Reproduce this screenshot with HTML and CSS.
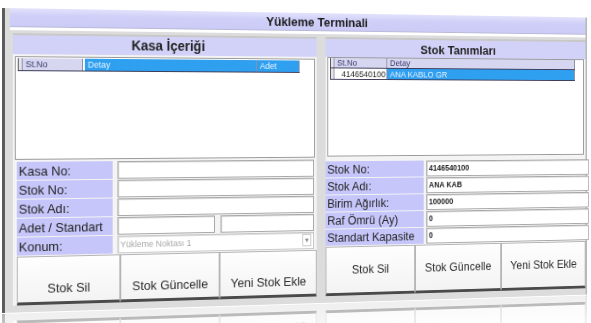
FILE: index.html
```html
<!DOCTYPE html>
<html lang="tr">
<head>
    <meta charset="UTF-8">
    <title>Yükleme Terminali</title>
    <link rel="stylesheet" href="styles.css">
</head>
<body>

<div class="stage">
    <div class="window">
        <div class="titlebar">Yükleme Terminali</div>

        <div class="panels">
            <!-- Kasa İçeriği -->
            <section class="panel panel-left">
                <div class="panel-head">Kasa İçeriği</div>
                <div class="grid">
                    <div class="grid-row grid-head">
                        <span class="cell mark"></span>
                        <span class="cell c-no">St.No</span>
                        <span class="cell c-detay sel">Detay</span>
                        <span class="cell c-adet sel">Adet</span>
                    </div>
                </div>
                <div class="form">
                    <div class="row"><label>Kasa No:</label><div class="field"></div></div>
                    <div class="row"><label>Stok No:</label><div class="field"></div></div>
                    <div class="row"><label>Stok Adı:</label><div class="field"></div></div>
                    <div class="row"><label>Adet / Standart</label><div class="field"></div><div class="field"></div></div>
                    <div class="row"><label>Konum:</label><div class="field combo">Yükleme Noktası 1<span class="arrow">&#9662;</span></div></div>
                </div>
                <div class="buttons">
                    <button>Stok Sil</button>
                    <button>Stok Güncelle</button>
                    <button>Yeni Stok Ekle</button>
                </div>
            </section>

            <!-- Stok Tanımları -->
            <section class="panel panel-right">
                <div class="panel-head">Stok Tanımları</div>
                <div class="grid">
                    <div class="grid-row grid-head">
                        <span class="cell mark"></span>
                        <span class="cell c-no">St.No</span>
                        <span class="cell c-detay">Detay</span>
                    </div>
                    <div class="grid-row grid-data">
                        <span class="cell mark"></span>
                        <span class="cell c-no num">4146540100</span>
                        <span class="cell c-detay sel">ANA KABLO GR</span>
                    </div>
                </div>
                <div class="form">
                    <div class="row"><label>Stok No:</label><div class="field">4146540100</div></div>
                    <div class="row"><label>Stok Adı:</label><div class="field">ANA KAB</div></div>
                    <div class="row"><label>Birim Ağırlık:</label><div class="field">100000</div></div>
                    <div class="row"><label>Raf Ömrü (Ay)</label><div class="field">0</div></div>
                    <div class="row"><label>Standart Kapasite</label><div class="field">0</div></div>
                </div>
                <div class="buttons">
                    <button>Stok Sil</button>
                    <button>Stok Güncelle</button>
                    <button>Yeni Stok Ekle</button>
                </div>
            </section>
        </div>
    </div>
</div>

</body>
</html>
```

FILE: styles.css
```css
* {
    margin: 0;
    padding: 0;
    box-sizing: border-box;
}

body {
    font-family: 'Liberation Sans', Arial, sans-serif;
    background: #fff;
    color: #222;
    overflow: hidden;
}

/* Stage clips the flat (wider) window */
.stage {
    width: 100%;
    height: 323px;
    overflow: hidden;
    padding: 8px 0 0 2px;
}

/* Window, tilted away to the right */
.window {
    width: 652px;
    height: 305px;
    background: #dcdcdc;
    border-left: 3px solid #5b5b5b;
    border-right: 2px solid #b8b8b8;
    padding: 0 0 7px 5px;
    display: flex;
    flex-direction: column;
    transform-origin: 0 104px;
    transform: perspective(1000px) rotateY(8.9deg);
    -webkit-box-reflect: below 1px linear-gradient(transparent 82%, rgba(255, 255, 255, 0.45));
}

.titlebar {
    height: 19px;
    background: linear-gradient(#e2e2fc, #cfcff8 40%, #cbcbf6);
    font-size: 13px;
    font-weight: bold;
    text-align: center;
    line-height: 19px;
    color: #1a1a1a;
    padding-left: 14px;
    border-bottom: 1px solid #b9b9d8;
}

.panels {
    flex: 1;
    display: flex;
    gap: 10px;
    padding: 3px 0 0 3px;
    border-top: 3px solid #fff;
}

.panel {
    display: flex;
    flex-direction: column;
    background: #f4f4f4;
    border-top: 2px solid #c8c8c8;
}

.panel-left {
    width: 324px;
}

.panel-right {
    width: 305px;
}

.panel-head {
    height: 19px;
    background: #d2d2f8;
    font-size: 14px;
    font-weight: bold;
    text-align: center;
    line-height: 19px;
}

.panel-right .panel-head {
    height: 19px;
    font-size: 13px;
    line-height: 21px;
}

/* Grids */
.grid {
    background: #fff;
    border: 1px solid #9a9a9a;
    margin: 2px 2px 0 2px;
    padding: 1px 16px 0 2px;
}

.panel-left .grid {
    height: 104px;
}

.panel-right .grid {
    height: 105px;
    margin-top: 0;
    padding-top: 0;
    padding-right: 10px;
}

.grid-row {
    display: flex;
    font-size: 9px;
}

.grid-head {
    height: 13px;
    line-height: 13px;
    border-bottom: 1px solid #3c3c5a;
}

.panel-right .grid-head {
    height: 11px;
    line-height: 11px;
}

.grid-data {
    height: 12px;
    line-height: 12px;
    border-bottom: 1px solid #3c3c5a;
}

.cell {
    display: block;
    padding-left: 3px;
    border-right: 1px solid #8e8ea8;
    background: #d6d6f0;
    color: #3a3a6c;
    white-space: nowrap;
    overflow: hidden;
}

.cell.mark {
    width: 5px;
    padding: 0;
    border-left: 1px solid #555;
    background: #e4e4ee;
}

.cell.sel {
    background: #2f9ff0;
    color: #e8f4ff;
}

.panel-left .c-no {
    width: 62px;
}

.panel-left .c-detay {
    width: 184px;
    margin-left: 2px;
}

.panel-left .c-adet {
    flex: 1;
}

.panel-right .c-no {
    width: 60px;
}

.panel-right .c-detay {
    flex: 1;
}

.grid-data .num {
    background: #fff;
    color: #222;
    text-align: right;
    padding-right: 1px;
}

/* Forms */
.form {
    display: flex;
    flex-direction: column;
    gap: 1px;
    padding: 2px 0 0 4px;
}

.row {
    display: flex;
    gap: 5px;
    height: 18px;
}

.row label {
    width: 99px;
    background: #c6c6fa;
    font-size: 13px;
    line-height: 19px;
    padding-left: 2px;
    white-space: nowrap;
}

.field {
    flex: 1;
    background: #fff;
    border: 1px solid #a8a8a8;
    box-shadow: inset 1px 1px 0 #dedede;
    margin-right: 3px;
}

.row .field + .field {
    margin-left: -2px;
}

.combo {
    position: relative;
    font-size: 9px;
    color: #a8a8a8;
    line-height: 16px;
    padding-left: 2px;
    border-color: #c8c8c8;
}

.combo .arrow {
    position: absolute;
    right: 2px;
    top: 1px;
    width: 10px;
    height: 13px;
    border: 1px solid #c8c8c8;
    font-size: 8px;
    line-height: 11px;
    text-align: center;
    color: #888;
}

.panel-right .form {
    padding: 5px 0 0 0;
}

.panel-right .row {
    height: 17px;
    gap: 3px;
}

.panel-right .row label {
    width: 112px;
    font-size: 12.5px;
    line-height: 18px;
}

.panel-right .field {
    font-size: 8.5px;
    font-weight: bold;
    line-height: 14px;
    padding-left: 2px;
    margin-right: -4px;
}

/* Buttons */
.buttons {
    flex: 1;
    display: flex;
    padding: 1px 0 0 4px;
}

.buttons button {
    flex: 1;
    font-family: inherit;
    font-size: 13px;
    color: #2a2a2a;
    background: linear-gradient(#fefefe, #f3f3f3);
    border: 1px solid #b4b4b4;
    border-bottom: 3px solid #4a4a4a;
    padding-top: 18px;
}

.panel-right .buttons {
    padding: 1px 0 0 0;
}

.panel-right .buttons button {
    font-size: 12.5px;
    padding-top: 0;
}
```
